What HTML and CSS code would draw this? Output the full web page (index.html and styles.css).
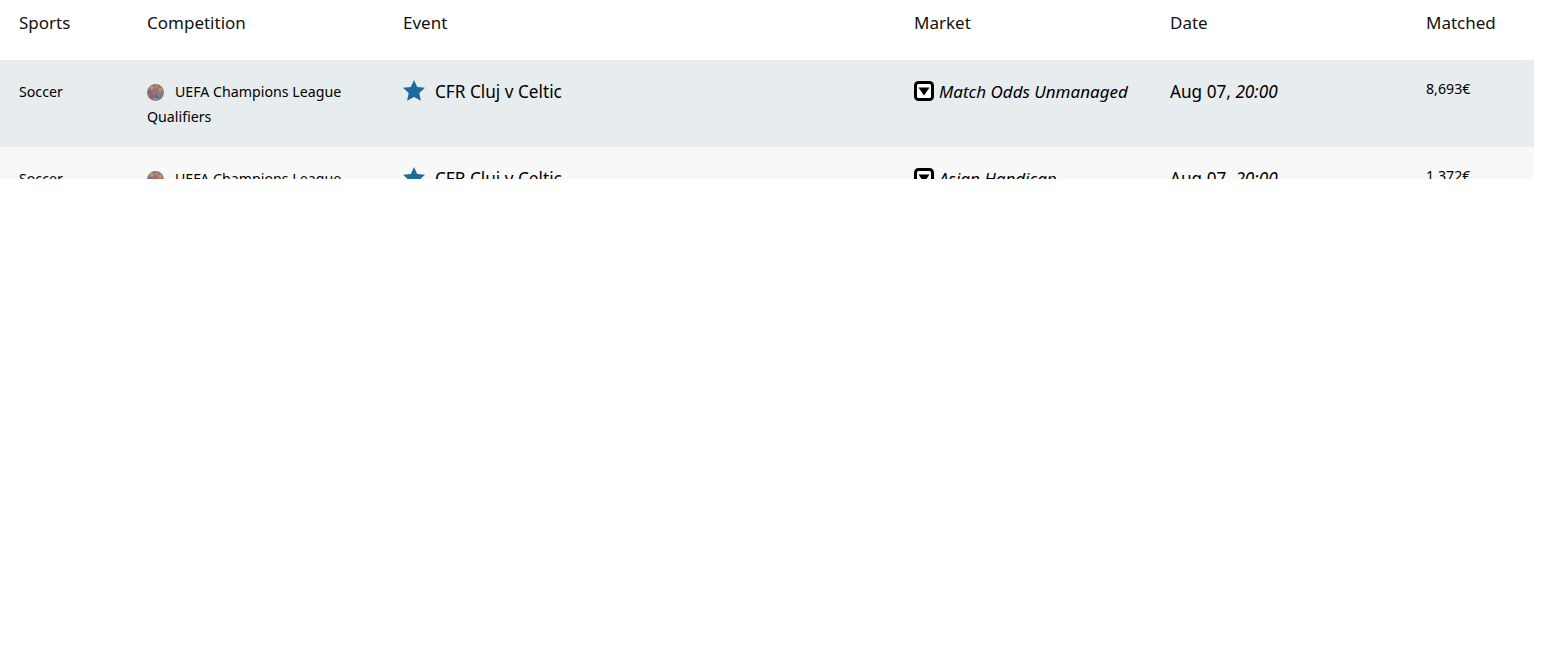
FILE: index.html
```html
<!DOCTYPE html>
<html lang="en">
<head>
<meta charset="utf-8">
<title>Markets</title>
<link rel="stylesheet" href="styles.css">
</head>
<body>
<div class="viewport">
  <table class="markets">
    <colgroup>
      <col class="c-sport"><col class="c-comp"><col class="c-event"><col class="c-market"><col class="c-date"><col class="c-matched">
    </colgroup>
    <thead>
      <tr><th>Sports</th><th>Competition</th><th>Event</th><th>Market</th><th>Date</th><th>Matched</th></tr>
    </thead>
    <tbody>
      <tr class="row-a">
        <td class="small">Soccer</td>
        <td class="small"><svg class="ball" viewBox="0 0 18 18"><circle cx="9" cy="9" r="9" fill="#8f7578"/><circle cx="5" cy="4" r="2.200" fill="#c09a5f"/><circle cx="10" cy="3" r="2" fill="#a58a7a"/><circle cx="14" cy="6" r="2.200" fill="#cc8f50"/><circle cx="3" cy="9" r="2" fill="#6f6aa0"/><circle cx="8" cy="8" r="2.200" fill="#cc5a66"/><circle cx="13" cy="11" r="2" fill="#5f9090"/><circle cx="5" cy="13" r="2" fill="#a8567c"/><circle cx="10" cy="13" r="2" fill="#5070b0"/><circle cx="9" cy="16.500" r="1.500" fill="#9a9aa6"/></svg><span class="comp-name">UEFA Champions League Qualifiers</span></td>
        <td class="large"><svg class="star" viewBox="0 0 24 23"><path d="M12 1l3.200 6.900 7.800.9-5.700 5.200 1.600 7.700L12 17.900l-6.900 3.800 1.600-7.700L1 8.800l7.800-.9z"/></svg><span>CFR Cluj v Celtic</span></td>
        <td class="large"><svg class="drop" viewBox="0 0 20 20"><rect x="1.500" y="1.500" width="17" height="17" rx="3" fill="#fff" stroke="#000" stroke-width="3"/><path d="M4.500 6.500h11L10 14.500z"/></svg><em class="market-name">Match Odds Unmanaged</em></td>
        <td class="large">Aug 07, <em>20:00</em></td>
        <td class="small amount">8,693€</td>
      </tr>
      <tr class="row-b">
        <td class="small">Soccer</td>
        <td class="small"><svg class="ball" viewBox="0 0 18 18"><circle cx="9" cy="9" r="9" fill="#8f7578"/><circle cx="5" cy="4" r="2.200" fill="#c09a5f"/><circle cx="10" cy="3" r="2" fill="#a58a7a"/><circle cx="14" cy="6" r="2.200" fill="#cc8f50"/><circle cx="3" cy="9" r="2" fill="#6f6aa0"/><circle cx="8" cy="8" r="2.200" fill="#cc5a66"/><circle cx="13" cy="11" r="2" fill="#5f9090"/><circle cx="5" cy="13" r="2" fill="#a8567c"/><circle cx="10" cy="13" r="2" fill="#5070b0"/><circle cx="9" cy="16.500" r="1.500" fill="#9a9aa6"/></svg><span class="comp-name">UEFA Champions League Qualifiers</span></td>
        <td class="large"><svg class="star" viewBox="0 0 24 23"><path d="M12 1l3.200 6.900 7.800.9-5.700 5.200 1.600 7.700L12 17.900l-6.900 3.800 1.600-7.700L1 8.800l7.800-.9z"/></svg><span>CFR Cluj v Celtic</span></td>
        <td class="large"><svg class="drop" viewBox="0 0 20 20"><rect x="1.500" y="1.500" width="17" height="17" rx="3" fill="#fff" stroke="#000" stroke-width="3"/><path d="M4.500 6.500h11L10 14.500z"/></svg><em class="market-name">Asian Handicap</em></td>
        <td class="large">Aug 07, <em>20:00</em></td>
        <td class="small amount">1,372€</td>
      </tr>
    </tbody>
  </table>
</div>
</body>
</html>
```
FILE: styles.css
```css
html, body {
  margin: 0;
  padding: 0;
  background: #fff;
}
body {
  font-family: "Noto Sans", "Open Sans", sans-serif;
  color: #111;
}
.viewport {
  width: 1534px;
  height: 179px;
  overflow: hidden;
}
.markets {
  width: 1534px;
  table-layout: fixed;
  border-collapse: collapse;
}
.c-sport { width: 128px; }
.c-comp { width: 256px; }
.c-event { width: 511px; }
.c-market { width: 256px; }
.c-date { width: 256px; }
.c-matched { width: 127px; }
th {
  height: 60px;
  padding: 13px 10px 0 19px;
  box-sizing: border-box;
  vertical-align: top;
  text-align: left;
  font-weight: 400;
  font-size: 17px;
  line-height: 20px;
}
td {
  height: 87px;
  box-sizing: border-box;
  padding: 19px 10px 0 19px;
  vertical-align: top;
  color: #000;
}
.row-a { background: #e7ecee; }
.row-b { background: #f8f8f8; }
.small {
  font-size: 14.200px;
  line-height: 25px;
}
.large {
  font-size: 17.200px;
  line-height: 26px;
}
.market-name {
  font-size: 17px;
}
.amount {
  font-size: 14.200px;
  padding-top: 16px;
}
.ball {
  width: 17px;
  height: 17px;
  vertical-align: -4px;
  margin-right: 11px;
}
.star {
  width: 24px;
  height: 23px;
  vertical-align: -4px;
  margin-left: -1px;
  margin-right: 9px;
  fill: #1c6a9e;
}
.drop {
  width: 20px;
  height: 20px;
  vertical-align: -3px;
  margin-right: 5px;
}
```
